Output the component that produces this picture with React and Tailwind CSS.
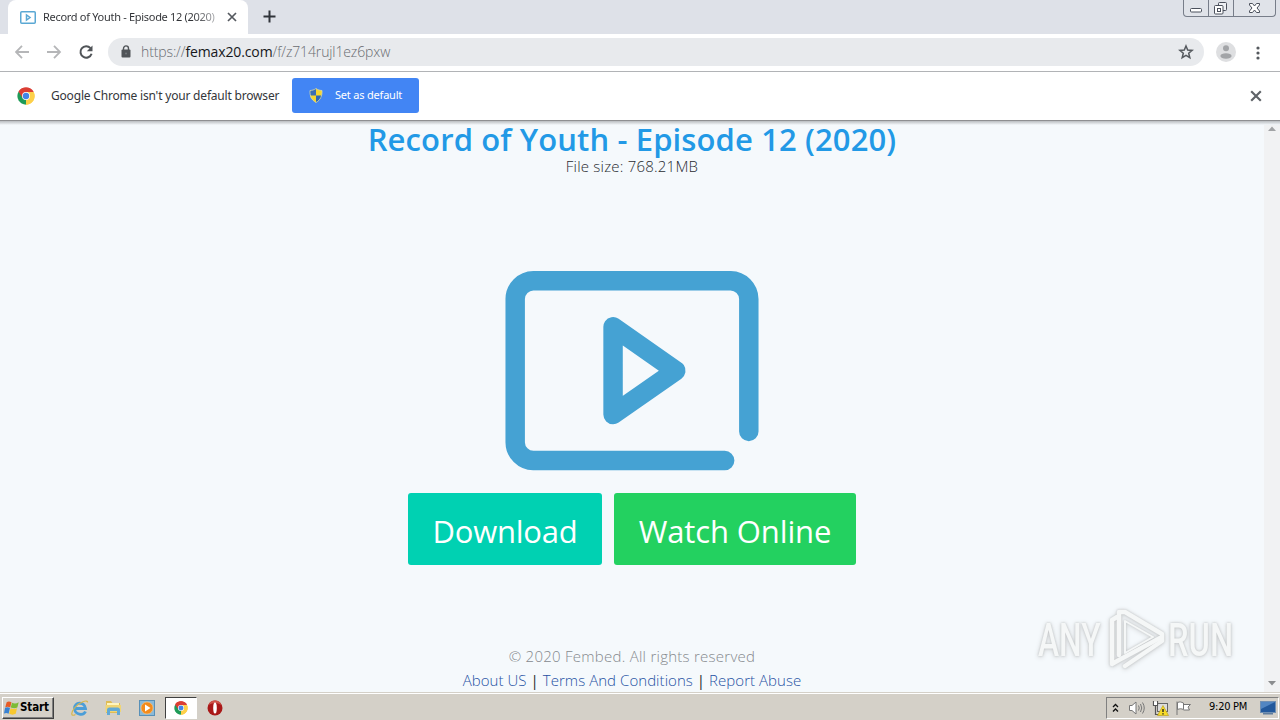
import React from "react";

function ChromeLogo({ size = 17 }) {
  return (
    <svg width={size} height={size} viewBox="0 0 48 48" className="shrink-0">
      <circle cx="24" cy="24" r="23" fill="#fff" />
      <path d="M24 24 L4.1 12.5 A23 23 0 0 1 43.9 12.5 Z" fill="#db3e34" />
      <path d="M24 24 L43.9 12.5 A23 23 0 0 1 24 47 Z" fill="#fdd04a" />
      <path d="M24 24 L24 47 A23 23 0 0 1 4.1 12.5 Z" fill="#1e9b58" />
      <path d="M24 13.5H44.4A23 23 0 0 0 4.1 12.5L15 29Z" fill="#db3e34" />
      <path d="M33 29L23 47A23 23 0 0 0 44.4 13.5H24Z" fill="#fdd04a" />
      <circle cx="24" cy="24" r="10.5" fill="#fff" />
      <circle cx="24" cy="24" r="8.5" fill="#4285e8" />
    </svg>
  );
}

function VideoMark({ className, weight = 19.5 }) {
  return (
    <svg viewBox="0 0 254 200" className={className} fill="none" stroke="#45a2d3" strokeWidth={weight} strokeLinecap="round" strokeLinejoin="round">
      <path d="M244.2 161V28A18.5 18.5 0 0 0 226 9.8H28A18.5 18.5 0 0 0 9.8 28V172A18.5 18.5 0 0 0 28 190.2H220" />
      <path d="M108 56V144L171 100Z" />
    </svg>
  );
}

function Cross({ size, color, weight = 2 }) {
  return (
    <svg width={size} height={size} viewBox="0 0 10 10" className="shrink-0" fill="none" stroke={color} strokeWidth={weight}>
      <path d="M1 1L9 9M9 1L1 9" />
    </svg>
  );
}

function WindowButtons() {
  return (
    <div className="ml-auto mr-1 flex h-[17px] w-[93px] overflow-hidden rounded-b-[4px] border border-t-0 border-[#777d89] bg-[#e0e3e9]">
      <svg width="91" height="16" viewBox="0 0 91 16" fill="none" stroke="#4b505c">
        <path d="M24.5 0V16M49.5 0V16" stroke="#777d89" />
        <rect x="6.5" y="8.5" width="11" height="3.5" rx="1" fill="#fff" />
        <rect x="34.5" y="2.5" width="8" height="8" rx="1" fill="#eef0f4" />
        <rect x="30.500" y="5.500" width="8.500" height="8.500" rx="1" fill="#fff" />
        <rect x="33.500" y="8.500" width="3" height="3" />
        <path d="M65.500 3.500H68.500L70.500 6L72.500 3.500H75.500V5L73 8L75.500 11V12.500H72.500L70.500 10L68.500 12.500H65.500V11L68 8L65.500 5Z" fill="#fff" />
      </svg>
    </div>
  );
}

function TabStrip() {
  return (
    <div className="flex h-[34px] bg-[#dee1e8]">
      <div className="ml-2 flex h-full w-[240px] items-center rounded-t-[8px] bg-white pl-3">
        <svg width="16" height="13" viewBox="0 0 16 13" fill="none" stroke="#5aa8d4" strokeWidth="1.5">
          <rect x="0.750" y="0.750" width="14.500" height="11.500" rx="1" />
          <path d="M6.500 4V9L10 6.500Z" />
        </svg>
        <div className="ml-[7px] w-[176px] whitespace-nowrap bg-gradient-to-r from-[#303236] from-85% to-[#c4c5c8] bg-clip-text font-['Noto_Sans',sans-serif] text-[11px] tracking-[-0.3px] text-transparent">
          Record of Youth - Episode 12 (2020)
        </div>
        <div className="ml-[8px] flex"><Cross size={10} color="#55595f" weight={1.7} /></div>
      </div>
      <svg className="ml-[15px] mt-[10px]" width="13" height="13" viewBox="0 0 13 13" stroke="#30343a" strokeWidth="2">
        <path d="M6.500 0.500V12.500M0.500 6.500H12.500" />
      </svg>
      <WindowButtons />
    </div>
  );
}

function Toolbar() {
  return (
    <div className="flex h-[38px] items-center border-b border-[#b1b3b6] bg-white">
      <svg className="ml-[15px] -mt-[2px]" width="80" height="16" viewBox="0 0 80 16" fill="none" strokeWidth="1.800">
        <path d="M14 8H1.500M7 1.800L1 8L7 14.200" stroke="#b5b6b8" />
        <path d="M32 8H44.500M39 1.800L45 8L39 14.200" stroke="#b5b6b8" />
        <path d="M75.500 4.200A5.700 5.700 0 1 0 76.600 9.700" stroke="#505458" strokeWidth="2" />
        <path d="M77.500 1.500V7.200H71.800Z" fill="#505458" />
      </svg>
      <div className="-mt-[2px] ml-[13px] flex h-7 w-[1096px] items-center rounded-full bg-[#e8eaed] pl-[13px] pr-[10px]">
        <svg width="10" height="13" viewBox="0 0 10 13">
          <rect x="0.500" y="4.500" width="9" height="8" rx="1" fill="#505458" />
          <path d="M2.500 5V3.400A2.500 2.500 0 0 1 7.500 3.400V5" fill="none" stroke="#505458" strokeWidth="1.400" />
          <circle cx="5" cy="8.500" r="1" fill="#74787c" />
        </svg>
        <span className="ml-[10px] whitespace-nowrap font-['Open_Sans',sans-serif] text-[14px] font-light tracking-[-0.120px] text-[#686c71]">
          https://<span className="font-normal text-[#16181b]">femax20.com</span>/f/z714rujl1ez6pxw
        </span>
        <svg className="ml-auto" width="16" height="16" viewBox="0 0 16 16" fill="none" stroke="#55595e" strokeWidth="1.500">
          <path d="M8 2L9.700 6.100L14.100 6.400L10.700 9.300L11.800 13.700L8 11.300L4.200 13.700L5.300 9.300L1.900 6.400L6.300 6.100Z" />
        </svg>
      </div>
      <svg className="-mt-[2px] ml-3" width="20" height="20" viewBox="0 0 20 20" fill="#a2a4a7">
        <circle cx="10" cy="10" r="10" fill="#dedfe1" />
        <circle cx="10" cy="6.300" r="3" />
        <ellipse cx="10" cy="14" rx="5.600" ry="2.700" />
      </svg>
      <svg className="ml-[20px]" width="4" height="16" viewBox="0 0 4 16" fill="#55595e">
        <circle cx="2" cy="3" r="1.600" />
        <circle cx="2" cy="8" r="1.600" />
        <circle cx="2" cy="13" r="1.600" />
      </svg>
    </div>
  );
}

function InfoBar() {
  return (
    <div className="flex h-[49px] items-center border-b border-[#8e8f91] bg-white pb-px">
      <div className="ml-[17px] flex"><ChromeLogo size={18} /></div>
      <span className="ml-[16px] w-[229px] whitespace-nowrap font-['Noto_Sans',sans-serif] text-[12px] tracking-[-0.190px] text-[#34363a]">
        Google Chrome isn't your default browser
      </span>
      <div className="ml-[12px] flex h-[35px] w-[127px] items-center rounded-[3px] bg-[#4285f4] pl-[17px]">
        <svg width="14" height="15" viewBox="0 0 14 15">
          <path d="M7 0.500C5 2 3 2.400 1 2.500C0.700 8 2.500 12 7 14.500Z" fill="#3b6eb4" />
          <path d="M7 0.500C9 2 11 2.400 13 2.500C13.300 8 11.500 12 7 14.500Z" fill="#f5d630" />
          <path d="M1 7.500H7V14.500C3.500 12.700 1.600 10 1 7.500Z" fill="#f5d630" />
          <path d="M7 7.500H13C12.400 10 10.500 12.700 7 14.500Z" fill="#2f68b4" />
          <path d="M7 0.500C5 2 3 2.400 1 2.500C0.700 8 2.500 12 7 14.500C11.500 12 13.300 8 13 2.500C11 2.400 9 2 7 0.500Z" fill="none" stroke="#d6dba9" strokeWidth="0.800" />
        </svg>
        <span className="ml-[12px] whitespace-nowrap font-['Noto_Sans',sans-serif] text-[11px] tracking-[-0.200px] text-white">Set as default</span>
      </div>
      <div className="ml-auto mr-[18px] flex"><Cross size={12} color="#5f6368" weight={1.800} /></div>
    </div>
  );
}

function Watermark() {
  return (
    <div className="absolute left-[1038px] top-[485px] flex items-center font-['Roboto',sans-serif] text-[46px] font-medium leading-[68px] text-[#f5f7f7] [filter:drop-shadow(0_0_1px_#c0c3c4)_drop-shadow(0_1px_2px_#d3d6d8)]">
      <span className="w-[70px]"><span className="inline-block origin-left scale-x-[0.690]">ANY</span></span>
      <svg width="58" height="64" viewBox="0 0 58 64" fill="none" stroke="#f5f7f7" strokeWidth="4.500" strokeLinejoin="round" strokeLinecap="round">
        <path d="M9 9L4 12V56L11 52L52 30" />
        <path d="M11 47V4L17 4L54 26V33L17 58" />
        <path d="M17 13L45 29L17 45Z" strokeWidth="2" />
      </svg>
      <span className="ml-[2px] w-[68px]"><span className="inline-block origin-left scale-x-[0.710]">RUN</span></span>
    </div>
  );
}

function Page() {
  return (
    <main className="relative flex h-[571px] bg-[#f5f9fc]">
      <div className="absolute inset-x-0 top-0 h-[4px] bg-gradient-to-b from-[#babdc0] to-[#f5f9fc]" />
      <div className="flex w-[1264px] flex-col items-center font-['Open_Sans',sans-serif]">
        <h1 className="h-[36px] whitespace-nowrap text-[31px] font-semibold leading-[37px] tracking-[0.120px] text-[#2299e6]">
          Record of Youth - Episode 12 (2020)
        </h1>
        <p className="h-[24px] whitespace-nowrap text-[15px] font-light leading-[19px] tracking-[0.220px] text-[#282b30]">File size: 768.21MB</p>
        <VideoMark className="mt-[90.500px] h-[200px] w-[254px]" />
        <div className="mt-[22.500px] flex h-[72px] gap-3 text-[31px] font-normal text-white">
          <button className="flex w-[194px] items-center justify-center whitespace-nowrap rounded-[3px] bg-[#00d1b2] pt-[5px] tracking-[-0.250px]">Download</button>
          <button className="flex w-[242px] items-center justify-center whitespace-nowrap rounded-[3px] bg-[#23d160] pt-[5px] tracking-[-0.120px]">Watch Online</button>
        </div>
        <footer className="mt-[79px] flex flex-col items-center whitespace-nowrap text-[15px] font-light leading-6 text-[#85898e]">
          <p className="tracking-[0.260px]">© 2020 Fembed. All rights reserved</p>
          <p className="tracking-[0.050px] text-[#24272a]">
            <a className="text-[#1f51a3]">About US</a> <span className="font-normal">|</span> <a className="text-[#1f51a3]">Terms And Conditions</a> <span className="font-normal">|</span> <a className="text-[#1f51a3]">Report Abuse</a>
          </p>
        </footer>
      </div>
      <div className="flex w-4 flex-col items-center justify-between bg-[#f1f2f3] pb-[6px] pt-[5px]">
        <svg width="8" height="5" viewBox="0 0 8 5" fill="#a1a3a5"><path d="M0 5L4 0.500L8 5Z" /></svg>
        <svg width="8" height="5" viewBox="0 0 8 5" fill="#8b8d8f"><path d="M0 0L4 4.500L8 0Z" /></svg>
      </div>
      <Watermark />
    </main>
  );
}

function Taskbar() {
  return (
    <div className="flex h-[28px] items-center border-t border-[#d4d0c8] bg-[#d4d0c8] shadow-[inset_0_1px_0_#fff]">
      <div className="ml-[2px] mt-[2px] flex h-[22px] w-[52px] items-center border border-b-[#404040] border-l-white border-r-[#404040] border-t-white pl-px shadow-[inset_-1px_-1px_0_#808080]">
        <svg width="16" height="16" viewBox="0 0 15 15" className="shrink-0">
          <path d="M2.500 2C4 1 5.500 1.200 7 2.200L5.800 7C4.200 6 2.800 6 1.200 6.800Z" fill="#e75b25" />
          <path d="M7.500 2.500C9.500 3.500 11.500 3.500 13.800 2L12.500 7C10.500 8 9 8 6.300 7Z" fill="#7dbb35" />
          <path d="M1 7.300C2.500 6.500 4 6.500 5.600 7.500L4.300 13C3 12 1.500 12 0 12.700Z" fill="#3982d2" />
          <path d="M6.200 7.700C8.500 8.700 10.500 8.700 12.200 7.700L11 13C9 14 7 14 4.800 13Z" fill="#f8c82f" />
        </svg>
        <span className="font-['DejaVu_Sans_Condensed','DejaVu_Sans',sans-serif] text-[11.500px] font-bold tracking-[-0.100px] text-black">Start</span>
      </div>
      <div className="mt-[2px] flex h-[22px] items-center pl-[17px]">
        <svg width="18" height="18" viewBox="0 0 18 18" fill="none">
          <path d="M14.500 12.500C12.500 17 4 16 3.500 9.500C3 3 13.500 2 14.500 9.500H5" stroke="#4b9ed8" strokeWidth="2.800" />
          <path d="M16.500 3.500C17 0 8 3 3.500 9C-0.500 14 0 18 4.500 15.500" stroke="#d7b74c" strokeWidth="1.200" />
        </svg>
        <svg className="ml-[16px]" width="17" height="17" viewBox="0 0 17 17">
          <path d="M1 2H6L7.500 4H15V14H1Z" fill="#dfbc55" />
          <path d="M2 4H14V8H2Z" fill="#fff5bd" />
          <path d="M0.500 6H16V13H0.500Z" fill="#f0d574" />
          <path d="M2 16V11Q2 8.500 4.500 8.500H12.500Q15 8.500 15 11V16H12V12H5V16Z" fill="#62a9d5" />
        </svg>
        <svg className="ml-[17px]" width="16" height="16" viewBox="0 0 16 16">
          <rect x="0.500" y="0.500" width="15" height="15" fill="#8bbad8" stroke="#5890b8" />
          <circle cx="8" cy="8" r="6" fill="#f38b1c" stroke="#fbc27a" strokeWidth="0.700" />
          <path d="M6 4.500V11.500L11.500 8Z" fill="#fff" />
        </svg>
        <div className="ml-[10px] flex h-[22px] w-[32px] items-center justify-center border border-b-white border-l-[#404040] border-r-white border-t-[#404040] bg-white">
          <ChromeLogo size={14} />
        </div>
        <svg className="ml-[10px]" width="16" height="16" viewBox="0 0 16 16">
          <circle cx="8" cy="8" r="7.500" fill="#a91818" />
          <path d="M1.500 5A7 7 0 0 1 14.500 5Q8 1 1.500 5Z" fill="#cf5148" />
          <ellipse cx="8" cy="8" rx="1.800" ry="5.500" fill="#fff" />
        </svg>
      </div>
      <div className="ml-auto mr-[1px] mt-[2px] flex h-[22px] w-[173px] items-center border border-b-white border-l-[#808080] border-r-white border-t-[#808080] pl-[5px]">
        <svg className="shrink-0" width="7" height="10" viewBox="0 0 7 10" fill="none" stroke="#111" strokeWidth="1.300"><path d="M1 4L3.500 1.500L6 4M1 8.500L3.500 6L6 8.500" /></svg>
        <svg className="ml-[9px] shrink-0" width="17" height="16" viewBox="0 0 17 16" fill="none" stroke="#777">
          <path d="M1.500 5.500H4L8 2V14L4 10.500H1.500Z" fill="#fff" />
          <path d="M10.500 5.500Q12 8 10.500 10.500M12.500 4Q15 8 12.500 12M14.500 2.500Q18 8 14.500 13.500" />
        </svg>
        <svg className="ml-[7px] shrink-0" width="17" height="16" viewBox="0 0 17 16" fill="none">
          <rect x="5.500" y="3.500" width="10" height="8" fill="#ddd" stroke="#666" />
          <path d="M1.500 1V5.500H5.500V1M3.500 6V14.500H8" stroke="#555" strokeWidth="1.200" />
          <path d="M2 1.500H5V5H2Z" fill="#fff" />
          <path d="M11 5.500L16.500 15.500H5.500Z" fill="#f7db28" stroke="#b69b10" strokeWidth="0.600" />
          <path d="M11 9V12M11 13.300V14.500" stroke="#222" strokeWidth="1.400" />
        </svg>
        <svg className="ml-[6px] shrink-0" width="17" height="16" viewBox="0 0 17 16" fill="#fff" stroke="#777"><path d="M2 15V1.500M2.500 2.500C5 1.500 6 2 8.500 3V9.500C6 8.500 5 8.500 2.500 9.500ZM8.500 4.500H15.500L13 7L14.500 10H8.500" /></svg>
        <span className="ml-[17px] w-[40px] whitespace-nowrap font-['DejaVu_Sans_Condensed','DejaVu_Sans',sans-serif] text-[11px] tracking-[-0.250px] text-black">9:20 PM</span>
        <svg className="ml-[11px] shrink-0" width="16" height="14" viewBox="0 0 16 14">
          <rect x="0.500" y="0.500" width="15" height="11" fill="#23599c" stroke="#7190b3" />
          <path d="M1 1H15L1 8Z" fill="#5286c2" />
          <path d="M3 12H13V13.500H3Z" fill="#607d9d" />
        </svg>
      </div>
    </div>
  );
}

export default function App() {
  return (
    <div className="flex h-[720px] w-[1280px] flex-col overflow-hidden bg-white">
      <TabStrip />
      <Toolbar />
      <InfoBar />
      <Page />
      <Taskbar />
    </div>
  );
}
